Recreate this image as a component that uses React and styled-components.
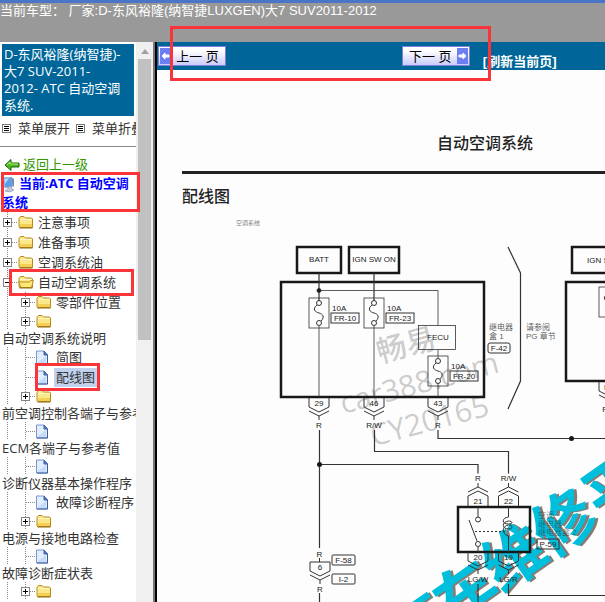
import React from 'react';
import styled, { createGlobalStyle, css } from 'styled-components';

const sans = "'Open Sans', 'Noto Sans CJK SC', sans-serif";
const arial = "'Liberation Sans', 'Noto Sans CJK SC', sans-serif";

const GlobalStyle = createGlobalStyle`
    html, body, #root {
        height: 100%;
        margin: 0;
    }

    body {
        overflow: hidden;
        background: #fff;
        font-family: ${sans};
        font-size: 13px;
        color: #333;
    }

    *, *::before, *::after {
        box-sizing: border-box;
    }
`;

const Page = styled.div`
    position: relative;
    height: 100%;
    display: flex;
    flex-direction: column;
    overflow: hidden;
`;

const Header = styled.header`
    flex: 0 0 42px;
    border-top: 3px solid #4b76c8;
    background: #999;
    color: #fff;
    font-family: ${arial};
    line-height: 16px;
    white-space: pre;
    overflow: hidden;
`;

const Frames = styled.div`
    flex: 1;
    min-height: 0;
    display: flex;
`;

const Sidebar = styled.aside`
    flex: 0 0 157px;
    display: flex;
    border-right: 2px solid #000;
    overflow: hidden;
`;

const SidebarContent = styled.div`
    flex: 1;
    min-width: 0;
    overflow: hidden;
    white-space: nowrap;
`;

const ScrollTrack = styled.div`
    flex: 0 0 19px;
    display: flex;
    flex-direction: column;
    align-items: center;
    background: #f0f0f0;
    border-right: 2px solid #777;

    svg {
        display: block;
        margin: 7px 0 5px;
    }
`;

const ScrollThumb = styled.div`
    width: 13px;
    height: 48%;
    min-height: 281px;
    background: #c1c1c1;
`;

const CarTitle = styled.h1`
    margin: 2px 2px 0;
    padding: 2px;
    background: #069;
    color: #fff;
    font-size: 13px;
    font-weight: 400;
    line-height: 17px;
`;

const MenuBar = styled.div`
    display: flex;
    align-items: center;
    height: 31px;
    padding: 0 0 6px 2px;
    border-bottom: 1px solid #888;
`;

const MenuButton = styled.button`
    flex: none;
    display: flex;
    align-items: center;
    gap: 7px;
    margin-right: 6px;
    padding: 0;
    border: 0;
    background: none;
    font: inherit;
    line-height: 20px;
    color: #333;
`;

const BackLink = styled.a`
    display: flex;
    align-items: center;
    gap: 3px;
    margin-top: 8px;
    padding-left: 4px;
    line-height: 19px;
    color: #390;
    text-decoration: none;
`;

const Current = styled.a`
    display: block;
    padding-left: 2px;
    line-height: 19px;
    font-weight: 700;
    color: #00f;
    text-decoration: none;

    svg {
        margin-right: 3px;
        vertical-align: middle;
    }
`;

const Tree = styled.ul`
    margin: 0;
    padding: 0;
    list-style: none;
`;

const dots = css`
    background: repeating-linear-gradient(to bottom, #888 0 1px, transparent 1px 2px);
`;

const Row = styled.div`
    display: flex;
    align-items: center;
    height: ${({ $bare }) => ($bare ? 18 : 20)}px;
`;

const Guide = styled.span`
    flex: 0 0 18px;
    align-self: stretch;
    display: flex;
    align-items: center;

    &::before {
        content: '';
        width: 1px;
        height: 100%;
        margin-left: 7px;
        ${dots}
    }
`;

const Branch = styled(Guide)`
    position: relative;

    &::after {
        content: '';
        width: 10px;
        height: 1px;
        background: repeating-linear-gradient(to right, #888 0 1px, transparent 1px 2px);
    }
`;

const Toggle = styled.button`
    position: absolute;
    left: 3px;
    display: flex;
    padding: 0;
    border: 0;
    background: #fff;
`;

const Label = styled.a`
    margin-left: 2px;
    padding: 0 2px;
    line-height: 19px;
    color: #333;
    text-decoration: none;
    background: ${({ $selected }) => ($selected ? '#c1d2ee' : 'transparent')};
`;

const WrappedLabel = styled.a`
    display: block;
    padding-left: 2px;
    line-height: 17px;
    color: #333;
    text-decoration: none;
`;

const Main = styled.main`
    flex: 1;
    min-width: 0;
    overflow: hidden;
    background: #fdfdfd;
`;

const Toolbar = styled.div`
    display: grid;
    grid-template-columns: 6fr 5fr;
    height: 28px;
    padding-left: 1px;
    background: #069;
`;

const ToolGroup = styled.div`
    display: flex;
    align-items: center;
    gap: 13px;
`;

const PageButton = styled.button`
    display: flex;
    flex-direction: ${({ $next }) => ($next ? 'row-reverse' : 'row')};
    align-items: stretch;
    width: 68px;
    height: 20px;
    padding: 1px;
    border: 1px solid #7d80d8;
    background: linear-gradient(to bottom, #fff 20%, #c9ccfa);
    font-family: ${arial};
    font-size: 13px;
    line-height: 17px;
    color: #000;
    white-space: nowrap;

    span {
        flex: 1;
    }

    svg {
        flex: none;
        background: #6b7ff0;
    }
`;

const Refresh = styled.a`
    align-self: flex-end;
    font-family: ${arial};
    font-weight: 700;
    line-height: 16px;
    color: #fff;
    text-decoration: none;
    white-space: nowrap;
`;

const Sheet = styled.article`
    min-width: 606px;
    margin-left: 25px;
    padding-top: 60px;
    color: #222;
`;

const SheetTitle = styled.h2`
    margin: 0;
    padding-bottom: 15px;
    border-bottom: 3px solid #222;
    font-size: 16px;
    font-weight: 500;
    line-height: 26px;
    text-align: center;
`;

const SectionTitle = styled.h3`
    margin: 0;
    padding: 10px 0 4px;
    font-size: 16px;
    font-weight: 500;
    line-height: 24px;
`;

const Diagram = styled.svg`
    display: block;
    font-family: ${arial};
    font-size: 8px;
    fill: none;
    stroke: #333;

    text {
        fill: #222;
        stroke: none;
    }
`;

const Highlight = styled.div`
    position: absolute;
    top: ${({ $y }) => $y}px;
    left: ${({ $x }) => $x}px;
    width: ${({ $w }) => $w}px;
    height: ${({ $h }) => $h}px;
    border: 3px solid #fb3439;
    pointer-events: none;
`;

const ListIcon = () => (
    <svg width="9" height="9" viewBox="0 0 9 9" shapeRendering="crispEdges">
        <rect x="0.5" y="0.5" width="8" height="8" fill="#fff" stroke="#777" />
        <path d="M2 2.5h5M2 4.5h5M2 6.5h5" stroke="#000" />
    </svg>
);

const BackIcon = () => (
    <svg width="16" height="14" viewBox="0 0 16 14">
        <path d="M1 7L7 1.5V5h8v4H7v3.5z" fill="#4db81f" stroke="#176b0b" />
        <path d="M3 6.8L6 4v2h8" fill="none" stroke="#b4ef7c" />
    </svg>
);

const ComputerIcon = () => (
    <svg width="14" height="16" viewBox="0 0 14 16">
        <path d="M1 1l8-1 2 9-8 2z" fill="#5a9bea" stroke="#96b8dc" />
        <path d="M2 2l5-1-4 6z" fill="#b7dcff" />
        <path d="M9 0l3 2v7l-1 1z" fill="#7688a5" />
        <path d="M6 10l3-1 1 3 2 1-4 2-5-1 3-2z" fill="#c2c9d8" stroke="#7c879d" strokeWidth="0.6" />
    </svg>
);

const ToggleIcon = ({ open }) => (
    <svg width="9" height="9" viewBox="0 0 9 9" shapeRendering="crispEdges">
        <rect x="0.5" y="0.5" width="8" height="8" fill="#fff" stroke="#848484" />
        <path d={open ? 'M2 4.5h5' : 'M2 4.5h5M4.5 2v5'} stroke="#000" />
    </svg>
);

const FolderIcon = ({ open }) => (
    <svg width="16" height="14" viewBox="0 0 16 14">
        <path d="M1 12V3.5L2.5 1.5H6L7.5 3h6L14.5 4v8.5h-13z" fill="#fbe88b" stroke="#b88a1c" />
        <path d="M2 4.5h12" stroke="#fff6c5" />
        {open
            ? <path d="M.6 7h11l1-1.5h2.8L13.5 12.5H3z" fill="#ffe778" stroke="#b88a1c" />
            : <path d="M2 9h12v3H2z" fill="#f3cf55" />}
        <path d="M1.5 13h13" stroke="#8e6a10" />
    </svg>
);

const DocIcon = () => (
    <svg width="16" height="15" viewBox="0 0 16 15">
        <path d="M.5 1h7.5l3.5 4v9H.5z" fill="#e2edfd" stroke="#7896ce" />
        <path d="M2 12l8-6v7H2z" fill="#c6dbfa" />
        <path d="M8 1v4h3.5z" fill="#5479bd" stroke="#3e62a8" />
        <path d="M11.5 5v9H1" fill="none" stroke="#3c5b9b" />
    </svg>
);

const ArrowIcon = ({ next }) => (
    <svg width="11" height="16" viewBox="0 0 11 16">
        <path d={next ? 'M9 8L6 5v2H2v2h4v2z' : 'M2 8l3-3v2h4v2H5v2z'} fill="#fff" stroke="#fff" />
    </svg>
);

const items = [
    { label: '注意事项', kind: 'folder', level: 0 },
    { label: '准备事项', kind: 'folder', level: 0 },
    { label: '空调系统油', kind: 'folder', level: 0 },
    { label: '自动空调系统', kind: 'folder', level: 0, open: true },
    { label: '零部件位置', kind: 'folder', level: 1 },
    { label: '自动空调系统说明', kind: 'folder', level: 1, wrapped: true },
    { label: '简图', kind: 'doc', level: 1 },
    { label: '配线图', kind: 'doc', level: 1, selected: true },
    { label: '前空调控制各端子与参考值', kind: 'folder', level: 1, wrapped: true },
    { label: 'ECM各端子与参考值', kind: 'doc', level: 1, wrapped: true },
    { label: '诊断仪器基本操作程序', kind: 'doc', level: 1, wrapped: true },
    { label: '故障诊断程序', kind: 'doc', level: 1 },
    { label: '电源与接地电路检查', kind: 'folder', level: 1, wrapped: true },
    { label: '故障诊断症状表', kind: 'doc', level: 1, wrapped: true },
    { label: '', kind: 'folder', level: 1, wrapped: true },
];

const TreeItem = ({ item }) => (
    <li>
        <Row $bare={item.wrapped}>
            {item.level > 0 && <Guide />}
            <Branch>
                {item.kind === 'folder' && (
                    <Toggle type="button">
                        <ToggleIcon open={item.open} />
                    </Toggle>
                )}
            </Branch>
            {item.kind === 'folder' ? <FolderIcon open={item.open} /> : <DocIcon />}
            {!item.wrapped && <Label href="#" $selected={item.selected}>{item.label}</Label>}
        </Row>
        {item.wrapped && item.label && <WrappedLabel href="#">{item.label}</WrappedLabel>}
    </li>
);

const Tag = ({ x, y, w, rx = 0, children }) => (
    <g>
        <rect x={x} y={y} width={w} height="10" rx={rx} />
        <text x={x + w / 2} y={y + 8} textAnchor="middle">{children}</text>
    </g>
);

const Fuse = ({ x, y, name }) => (
    <g>
        <rect x={x - 10} y={y} width="20" height="30" strokeWidth="0.8" />
        <circle cx={x} cy={y + 5} r="2.5" />
        <circle cx={x} cy={y + 25} r="2.5" />
        <path d={`M${x - 2} ${y + 7}c-5 4-2 7 2 8s6 4 2 8`} />
        <text x={x + 13} y={y + 13}>10A</text>
        <Tag x={x + 12} y={y + 15} w={28}>{name}</Tag>
    </g>
);

// pin housing with its chevron and wire colour below it
const PinDown = ({ x, y, pin, wire }) => (
    <g>
        <path d={`M${x - 10} ${y}v9l10 5 10-5v-9M${x - 10} ${y + 13}l10 5 10-5M${x} ${y + 18}v4`} />
        <text x={x} y={y + 8} textAnchor="middle">{pin}</text>
        <text x={x} y={y + 30} textAnchor="middle">{wire}</text>
    </g>
);

const PinUp = ({ x, y, pin, wire }) => (
    <g>
        <path d={`M${x - 10} ${y}v-10l10-5 10 5v10M${x - 10} ${y - 14}l10-5 10 5M${x} ${y - 19}v-4`} />
        <text x={x} y={y - 2} textAnchor="middle">{pin}</text>
        <text x={x} y={y - 25} textAnchor="middle">{wire}</text>
    </g>
);

const WiringDiagram = () => (
    <Diagram width="606" height="390" viewBox="182 212 606 390" role="img" aria-label="配线图">
        <text x="236" y="225" fontSize="6" fillOpacity="0.6">空调系统</text>

        <g fontFamily="'Open Sans', 'Noto Sans CJK SC', sans-serif" fontSize="30" fontWeight="500" fillOpacity="0.24" textAnchor="middle" transform="translate(422 393) rotate(-15)">
            <text x="-3" y="-40">畅易</text>
            <text x="0" y="0">car388.com</text>
            <text x="0" y="39">CY20165</text>
        </g>

        <g fontFamily="'Noto Sans CJK SC', sans-serif" fontSize="62" fontWeight="700" transform="translate(563 521) rotate(-35)">
            {[[-212, 26], [-152, 26], [-92, 24], [-31, 24], [32, 24]].map(([x, y], i) => (
                <g key={x}>
                    <text x={x + 2} y={y + 2} style={{ fill: '#8a7a74' }}>{'汽车维修平'[i]}</text>
                    <text x={x} y={y} style={{ fill: '#00bfdc' }}>{'汽车维修平'[i]}</text>
                </g>
            ))}
        </g>

        <g strokeWidth="2.5" stroke="#181818">
            <rect x="297" y="247" width="44" height="26" />
            <rect x="349" y="247" width="50" height="26" />
            <rect x="281" y="282" width="203" height="115" />
            <rect x="572" y="247" width="74" height="26" />
            <rect x="566" y="282" width="180" height="99" />
            <rect x="458" y="507" width="72" height="45" />
        </g>
        <text x="319" y="262" textAnchor="middle">BATT</text>
        <text x="374" y="262" textAnchor="middle">IGN SW ON</text>
        <text x="587" y="263">IGN SW ON</text>

        <path d="M319 273v28M374 273v28" strokeWidth="1.2" />
        <path d="M319 290.5h119v35M319 326v71M374 326v71M438 350v8M438 383v14" strokeWidth="0.8" />
        <circle cx="319" cy="290.5" r="2" fill="#181818" />
        <rect x="418.5" y="325.5" width="37" height="24" strokeWidth="0.8" />
        <text x="438" y="340" textAnchor="middle">FECU</text>
        <Fuse x={319} y={298} name="FR-10" />
        <Fuse x={374} y={298} name="FR-23" />
        <Fuse x={438} y={356} name="FR-20" />
        <Fuse x={609} y={287} name="FR-11" />

        <g fillOpacity="0.75">
            <text x="489" y="330">继电器</text>
            <text x="489" y="339">盒 1</text>
            <text x="526" y="330">请参阅</text>
            <text x="526" y="339">PG 章节</text>
        </g>
        <Tag x={488} y={343} w={22} rx={2}>F-42</Tag>
        <path d="M508 247l12.5 26v108l-12.5 28" strokeWidth="1.2" />

        <PinDown x={319} y={398} pin="29" wire="R" />
        <PinDown x={374} y={398} pin="46" wire="R/W" />
        <PinDown x={438} y={398} pin="43" wire="R" />
        <PinDown x={609} y={382} pin="H9" wire="R/B" />

        <g strokeWidth="1.2">
            <path d="M319.5 430v118M319.5 464.5h158.5v9" />
            <path d="M374.5 430v21.5h134v22" />
            <path d="M438 430v8.5h310" />
            <path d="M319.5 593v12M478 584v20M508.5 584v11.5h240" />
        </g>
        <circle cx="319.5" cy="464.5" r="2.5" fill="#181818" stroke="none" />
        <circle cx="571.5" cy="438.5" r="2.5" fill="#181818" stroke="none" />

        <text x="319.5" y="557" textAnchor="middle">R</text>
        <path d="M319.5 558v4M310 562h20" />
        <PinDown x={320} y={562} pin="6" wire="R" />
        <Tag x={332} y={555} w={23} rx={1}>F-58</Tag>
        <Tag x={332} y={574} w={23} rx={1}>I-2</Tag>

        <PinUp x={478} y={506} pin="21" wire="R" />
        <PinUp x={508.5} y={506} pin="22" wire="R/W" />
        <PinDown x={478} y={552} pin="20" wire="LG/W" />
        <PinDown x={508.5} y={552} pin="19" wire="LG/R" />

        <path d="M478 507v10M478 547v5M469 520l8 21" />
        <circle cx="478" cy="519.5" r="2.5" />
        <circle cx="478" cy="544" r="2.5" />
        <path d="M475 531.5h30" strokeDasharray="2 2" />
        <path d="M508.5 507v10c-7 1-7 7 0 7 5 0 4-3 0-3-7 1-7 8 0 8 5 0 4-4 0-4-7 1-7 9 0 11v16" />
        <g fillOpacity="0.55">
            <text x="538" y="518">空调</text>
            <text x="538" y="527">继电器</text>
            <text x="538" y="535">继电器盒 2</text>
        </g>
        <Tag x={537} y={539} w={22}>P-59</Tag>
    </Diagram>
);

const App = () => {
    return (
        <Page>
            <GlobalStyle />
            <Header>{'当前车型： 厂家:D-东风裕隆(纳智捷LUXGEN)大7 SUV2011-2012'}</Header>
            <Frames>
                <Sidebar>
                    <SidebarContent>
                        <CarTitle>
                            D-东风裕隆(纳智捷)-<br />
                            大7 SUV-2011-<br />
                            2012- ATC 自动空调<br />
                            系统.
                        </CarTitle>
                        <MenuBar>
                            <MenuButton type="button"><ListIcon />菜单展开</MenuButton>
                            <MenuButton type="button"><ListIcon />菜单折叠</MenuButton>
                        </MenuBar>
                        <BackLink href="#"><BackIcon />返回上一级</BackLink>
                        <Current href="#">
                            <ComputerIcon />当前:ATC 自动空调<br />
                            系统
                        </Current>
                        <Tree>
                            {items.map((item, i) => <TreeItem key={i} item={item} />)}
                        </Tree>
                    </SidebarContent>
                    <ScrollTrack>
                        <svg width="8" height="5" viewBox="0 0 8 5">
                            <path d="M0 5l4-5 4 5z" fill="#a0a0a0" />
                        </svg>
                        <ScrollThumb />
                    </ScrollTrack>
                </Sidebar>
                <Main>
                    <Toolbar>
                        <ToolGroup>
                            <PageButton type="button"><ArrowIcon /><span>上一 页</span></PageButton>
                        </ToolGroup>
                        <ToolGroup>
                            <PageButton type="button" $next><ArrowIcon next /><span>下一 页</span></PageButton>
                            <Refresh href="#">[刷新当前页]</Refresh>
                        </ToolGroup>
                    </Toolbar>
                    <Sheet>
                        <SheetTitle>自动空调系统</SheetTitle>
                        <SectionTitle>配线图</SectionTitle>
                        <WiringDiagram />
                    </Sheet>
                </Main>
            </Frames>
            <Highlight $x={170} $y={26} $w={321} $h={55} />
            <Highlight $x={1} $y={172} $w={139} $h={40} />
            <Highlight $x={9} $y={269} $w={125} $h={27} />
            <Highlight $x={35} $y={363} $w={65} $h={28} />
        </Page>
    );
};

export default App;
